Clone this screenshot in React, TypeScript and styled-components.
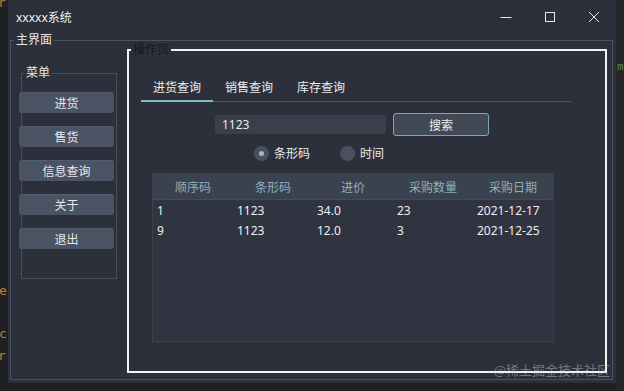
import React from 'react'
import styled, { createGlobalStyle } from 'styled-components'

const GlobalStyle = createGlobalStyle`
  html, body {
    margin: 0;
    padding: 0;
    background: #1f2023;
  }
  body {
    font-family: "Noto Sans", "Noto Sans CJK SC", sans-serif;
    font-size: 12px;
  }
`

export const Page = styled.div`
  position: relative;
  display: flex;
  width: 624px;
  height: 391px;
  overflow: hidden;
  background: #1f2023;
`

export const CodeStrip = styled.div`
  display: flex;
  flex-direction: column;
  width: 8px;
  overflow: hidden;
  font-family: "DejaVu Sans Mono", monospace;
  font-size: 13px;
  line-height: 14px;
  color: #c77c2e;
`

export const CodeChar = styled.span<{ $top: number; $shift?: number }>`
  display: block;
  margin-top: ${p => p.$top}px;
  margin-left: ${p => p.$shift ?? -2}px;
`

export const SideStrip = styled.div`
  flex: 1;
  background: #25262a;
  overflow: hidden;
  color: #5d8a4a;
  font-family: "DejaVu Sans Mono", monospace;
  font-size: 11px;
  padding-top: 60px;
  padding-left: 1px;
`

export const Window = styled.div`
  display: flex;
  flex-direction: column;
  width: 608px;
  height: 383px;
  background: #2c303a;
  color: #e4e6ea;
`

export const TitleBar = styled.div`
  display: flex;
  align-items: center;
  height: 34px;
  flex-shrink: 0;
  padding-left: 8px;
  font-size: 12px;
`

export const Title = styled.div`
  flex: 1;
  color: #eef0f3;
`

export const WinButton = styled.div`
  display: flex;
  align-items: center;
  justify-content: center;
  width: 44px;
  height: 34px;
`

export const Group = styled.fieldset`
  margin: 0;
  padding: 0;
  min-inline-size: 0;
  box-sizing: border-box;
  border: 1px solid #4c515c;
`

export const MainGroup = styled(Group)`
  flex: 1;
  margin: 0 3px 3px 2px;
`

export const Legend = styled.legend<{ $offset: number; $lh: number; $dark?: boolean }>`
  margin-left: ${p => p.$offset}px;
  padding: 0 2px;
  font-size: 12px;
  line-height: ${p => p.$lh}px;
  color: ${p => (p.$dark ? '#16181c' : '#e4e6ea')};
`

export const MainBody = styled.div`
  display: flex;
  align-items: flex-start;
  gap: 10px;
  padding: 0 5px 0 10px;
`

export const MenuGroup = styled(Group)`
  width: 96px;
  height: 213px;
  margin-top: 20px;
  border-color: #4a4f5a;
`

export const MenuList = styled.div`
  display: flex;
  flex-direction: column;
  gap: 13px;
  padding-top: 12px;
  margin-left: -3px;
`

export const MenuButton = styled.div`
  display: flex;
  align-items: center;
  justify-content: center;
  width: 95px;
  height: 21px;
  box-sizing: border-box;
  border-radius: 3px;
  background: #4a5363;
  border-top: 1px solid #535d6e;
  color: #e6e8ec;
  font-size: 12px;
`

export const OpGroup = styled(Group)`
  width: 480px;
  height: 330px;
  margin-top: -3px;
  border: 2px solid #f2f2f2;
`

export const OpBody = styled.div`
  display: flex;
  flex-direction: column;
  width: 430px;
  margin-left: 12px;
`

export const TabBar = styled.div`
  display: flex;
  margin-top: 17px;
  border-bottom: 1px solid #4e5460;
`

export const Tab = styled.div<{ $active?: boolean }>`
  display: flex;
  align-items: center;
  justify-content: center;
  width: 72px;
  height: 26px;
  margin-bottom: -1px;
  border-bottom: 2px solid ${p => (p.$active ? '#80bcc7' : 'transparent')};
  color: #eceef2;
  font-size: 12px;
`

export const SearchRow = styled.div`
  display: flex;
  align-items: center;
  gap: 7px;
  height: 23px;
  margin-top: 11px;
  margin-left: 74px;
`

export const SearchInput = styled.div`
  display: flex;
  align-items: center;
  width: 171px;
  height: 19px;
  padding-left: 7px;
  box-sizing: border-box;
  border-radius: 2px;
  background: #3a3f4b;
  color: #e8eaee;
  font-size: 12px;
`

export const SearchButton = styled.div`
  display: flex;
  align-items: center;
  justify-content: center;
  width: 96px;
  height: 23px;
  box-sizing: border-box;
  border: 1px solid #7aa7b3;
  border-radius: 3px;
  background: #414957;
  color: #eef0f3;
  font-size: 12px;
`

export const RadioRow = styled.div`
  display: flex;
  align-items: center;
  gap: 30px;
  height: 16px;
  margin-top: 9px;
  margin-left: 113px;
`

export const RadioItem = styled.div`
  display: flex;
  align-items: center;
  gap: 5px;
  color: #eceef2;
  font-size: 12px;
`

export const RadioDot = styled.span<{ $checked?: boolean }>`
  display: flex;
  align-items: center;
  justify-content: center;
  width: 15px;
  height: 15px;
  border-radius: 50%;
  background: #4a505d;

  &::after {
    content: '';
    width: 5px;
    height: 5px;
    border-radius: 50%;
    background: ${p => (p.$checked ? '#8cc3cb' : 'transparent')};
  }
`

export const Table = styled.div`
  display: flex;
  flex-direction: column;
  width: 402px;
  height: 169px;
  margin-top: 12px;
  margin-left: 11px;
  box-sizing: border-box;
  border: 1px solid #3b414d;
  background: #2f3440;
`

export const HeaderRow = styled.div`
  display: grid;
  grid-template-columns: repeat(5, 80px);
  height: 25px;
  background: #3b424f;
  border-bottom: 1px solid #444b59;
`

export const HeaderCell = styled.div`
  display: flex;
  align-items: center;
  justify-content: center;
  color: #8fb1bc;
  font-size: 12px;
`

export const Row = styled.div`
  display: grid;
  grid-template-columns: repeat(5, 80px);
  height: 20px;
`

export const Cell = styled.div`
  display: flex;
  align-items: center;
  padding-left: 4px;
  color: #eceef2;
  font-size: 12px;
`

export const Watermark = styled.div`
  position: absolute;
  right: 14px;
  bottom: 12px;
  font-family: "Noto Sans CJK SC", sans-serif;
  font-size: 13px;
  color: rgba(210, 212, 218, 0.45);
`

const columns = ['顺序码', '条形码', '进价', '采购数量', '采购日期']
const rows = [
  ['1', '1123', '34.0', '23', '2021-12-17'],
  ['9', '1123', '12.0', '3', '2021-12-25'],
]
const menu = ['进货', '售货', '信息查询', '关于', '退出']
const tabs = ['进货查询', '销售查询', '库存查询']

const MinIcon = () => (
  <svg width="12" height="12" viewBox="0 0 12 12">
    <line x1="0.5" y1="6.5" x2="11.5" y2="6.5" stroke="#e6e8ec" strokeWidth="1" />
  </svg>
)

const MaxIcon = () => (
  <svg width="12" height="12" viewBox="0 0 12 12">
    <rect x="1.5" y="1.5" width="9" height="9" fill="none" stroke="#e6e8ec" strokeWidth="1" />
  </svg>
)

const CloseIcon = () => (
  <svg width="12" height="12" viewBox="0 0 12 12">
    <path d="M1 1 L11 11 M11 1 L1 11" stroke="#e6e8ec" strokeWidth="1" />
  </svg>
)

const App: React.FC = () => {
  return (
    <Page>
      <GlobalStyle />
      <CodeStrip>
        <CodeChar $top={-4}>r</CodeChar>
        <CodeChar $top={274} $shift={-1}>e</CodeChar>
        <CodeChar $top={29} $shift={-1}>c</CodeChar>
        <CodeChar $top={8}>r</CodeChar>
      </CodeStrip>
      <Window>
        <TitleBar>
          <Title>xxxxx系统</Title>
          <WinButton><MinIcon /></WinButton>
          <WinButton><MaxIcon /></WinButton>
          <WinButton><CloseIcon /></WinButton>
        </TitleBar>
        <MainGroup>
          <Legend $offset={3} $lh={12}>主界面</Legend>
          <MainBody>
            <MenuGroup>
              <Legend $offset={2} $lh={14}>菜单</Legend>
              <MenuList>
                {menu.map(m => (
                  <MenuButton key={m}>{m}</MenuButton>
                ))}
              </MenuList>
            </MenuGroup>
            <OpGroup>
              <Legend $offset={2} $lh={14} $dark>操作页</Legend>
              <OpBody>
                <TabBar>
                  {tabs.map((t, i) => (
                    <Tab key={t} $active={i === 0}>{t}</Tab>
                  ))}
                </TabBar>
                <SearchRow>
                  <SearchInput>1123</SearchInput>
                  <SearchButton>搜索</SearchButton>
                </SearchRow>
                <RadioRow>
                  <RadioItem><RadioDot $checked />条形码</RadioItem>
                  <RadioItem><RadioDot />时间</RadioItem>
                </RadioRow>
                <Table>
                  <HeaderRow>
                    {columns.map(c => (
                      <HeaderCell key={c}>{c}</HeaderCell>
                    ))}
                  </HeaderRow>
                  {rows.map((r, i) => (
                    <Row key={i}>
                      {r.map((v, j) => (
                        <Cell key={j}>{v}</Cell>
                      ))}
                    </Row>
                  ))}
                </Table>
              </OpBody>
            </OpGroup>
          </MainBody>
        </MainGroup>
      </Window>
      <SideStrip>m</SideStrip>
      <Watermark>@稀土掘金技术社区</Watermark>
    </Page>
  )
}

export default App
